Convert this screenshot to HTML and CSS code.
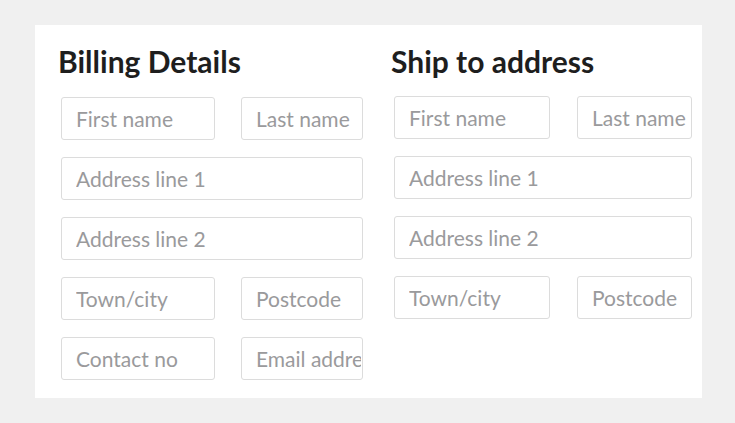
FILE: index.html
```html
<!DOCTYPE html>
<html lang="en">
<head>
<meta charset="utf-8">
<title>Checkout addresses</title>
<link rel="stylesheet" href="styles.css">
</head>
<body>
<div class="card">
  <section class="col col-billing">
    <h2 class="title">Billing Details</h2>
    <div class="fields">
      <input class="field" type="text" placeholder="First name">
      <input class="field" type="text" placeholder="Last name">
      <input class="field wide" type="text" placeholder="Address line 1">
      <input class="field wide" type="text" placeholder="Address line 2">
      <input class="field" type="text" placeholder="Town/city">
      <input class="field" type="text" placeholder="Postcode">
      <input class="field" type="text" placeholder="Contact no">
      <input class="field" type="text" placeholder="Email address">
    </div>
  </section>
  <section class="col col-ship">
    <h2 class="title">Ship to address</h2>
    <div class="fields">
      <input class="field" type="text" placeholder="First name">
      <input class="field" type="text" placeholder="Last name">
      <input class="field wide" type="text" placeholder="Address line 1">
      <input class="field wide" type="text" placeholder="Address line 2">
      <input class="field" type="text" placeholder="Town/city">
      <input class="field" type="text" placeholder="Postcode">
    </div>
  </section>
</div>
</body>
</html>
```

FILE: styles.css
```css
* { box-sizing: border-box; }

html, body {
  margin: 0;
  padding: 0;
  background: #f0f0f0;
  font-family: Lato, "Open Sans", sans-serif;
}

.card {
  margin: 25px 0 0 35px;
  width: 667px;
  height: 373px;
  background: #ffffff;
  display: flex;
  padding: 19px 0 0 26px;
  gap: 31px;
}

.col { display: flex; flex-direction: column; }
.col-billing { width: 302px; }
.col-ship { width: 298px; }

.title {
  margin: 0 0 0 -3px;
  font-size: 30px;
  line-height: 35px;
  font-weight: 700;
  color: #1e1e1e;
  white-space: nowrap;
}

.fields {
  display: grid;
  row-gap: 17px;
  margin-top: 18px;
}
.col-billing .fields { grid-template-columns: 154px 122px; column-gap: 26px; }
.col-ship .fields { grid-template-columns: 156px 115px; column-gap: 27px; margin-top: 17px; }

.field {
  height: 43px;
  width: 100%;
  margin: 0;
  padding: 0 1px 0 14px;
  border: 1px solid #dcdcdc;
  border-radius: 3px;
  background: #fff;
  font-family: Lato, "Open Sans", sans-serif;
  font-size: 21px;
  color: #555;
  outline: none;
}
.field::placeholder { color: #9a9a9c; opacity: 1; }
.wide { grid-column: 1 / -1; }
```
